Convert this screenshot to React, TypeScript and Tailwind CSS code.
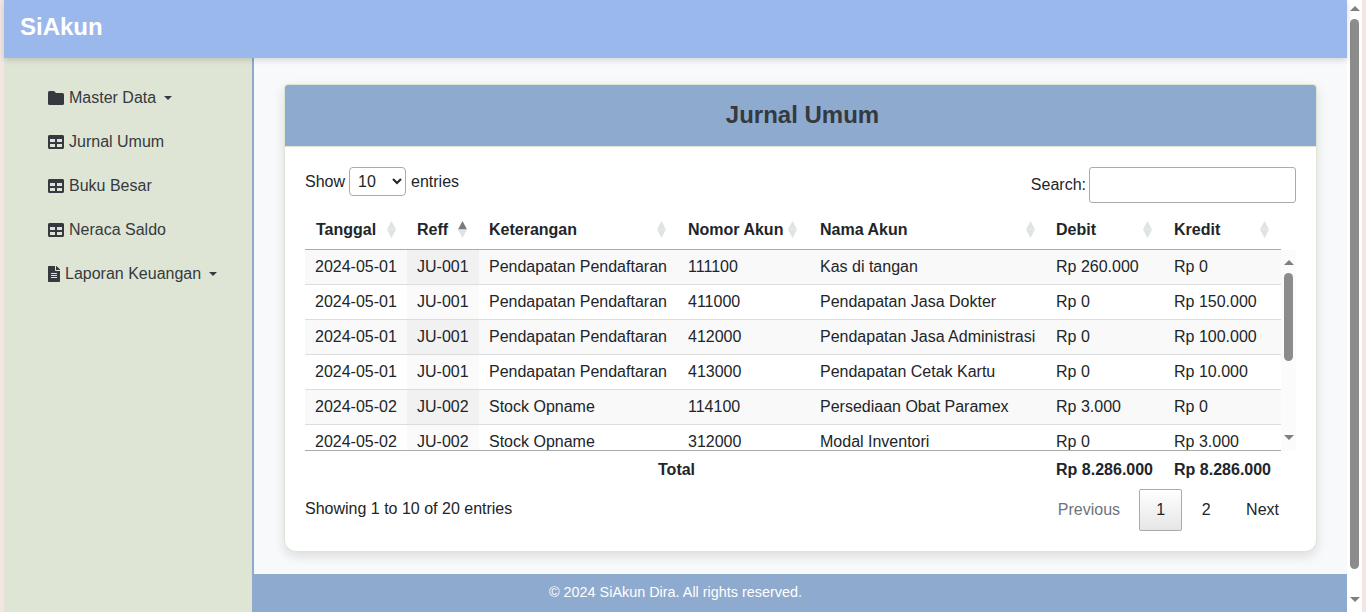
import { FaFileAlt, FaTable } from "react-icons/fa";

const rows = [
  ["2024-05-01", "JU-001", "Pendapatan Pendaftaran", "111100", "Kas di tangan", "Rp 260.000", "Rp 0"],
  ["2024-05-01", "JU-001", "Pendapatan Pendaftaran", "411000", "Pendapatan Jasa Dokter", "Rp 0", "Rp 150.000"],
  ["2024-05-01", "JU-001", "Pendapatan Pendaftaran", "412000", "Pendapatan Jasa Administrasi", "Rp 0", "Rp 100.000"],
  ["2024-05-01", "JU-001", "Pendapatan Pendaftaran", "413000", "Pendapatan Cetak Kartu", "Rp 0", "Rp 10.000"],
  ["2024-05-02", "JU-002", "Stock Opname", "114100", "Persediaan Obat Paramex", "Rp 3.000", "Rp 0"],
  ["2024-05-02", "JU-002", "Stock Opname", "312000", "Modal Inventori", "Rp 0", "Rp 3.000"],
];

const headers = [
  { label: "Tanggal", sort: "ml-[11px]" },
  { label: "Reff", sort: "ml-[10px]", active: true },
  { label: "Keterangan", sort: "ml-[80px]" },
  { label: "Nomor Akun", sort: "ml-[5px]" },
  { label: "Nama Akun", sort: "ml-[119px]" },
  { label: "Debit", sort: "ml-[47px]" },
  { label: "Kredit", sort: "ml-[40px]" },
];

const Cols = () => (
  <colgroup>
    <col className="w-[102px]" />
    <col className="w-[72px]" />
    <col className="w-[199px]" />
    <col className="w-[132px]" />
    <col className="w-[236px]" />
    <col className="w-[118px]" />
    <col className="w-[117px]" />
  </colgroup>
);

const SortIcon = ({ active }: { active?: boolean }) => (
  <svg width="9" height="17" viewBox="0 0 9 17" className="block shrink-0">
    <path d="M4.5 0 L9 8.5 L0 8.5 Z" fill={active ? "#7a7a7a" : "#e0e3e3"} />
    <path d="M4.5 17 L9 8.5 L0 8.5 Z" fill="#e0e3e3" />
  </svg>
);

const FolderIcon = () => (
  <svg width="16" height="14" viewBox="0 0 16 14" fill="currentColor" className="shrink-0">
    <path d="M1.5 0 H6 L8 2 H14.5 A1.5 1.5 0 0 1 16 3.5 V12.5 A1.5 1.5 0 0 1 14.5 14 H1.5 A1.5 1.5 0 0 1 0 12.5 V1.5 A1.5 1.5 0 0 1 1.5 0 Z" />
  </svg>
);

const MenuItem = ({ icon, label, caret }: { icon: React.ReactNode; label: string; caret?: boolean }) => (
  <div className="flex h-[44px] items-center pl-[44px] text-[#343a40]">
    {icon}
    <span className="ml-[5px]">{label}</span>
    {caret && <span className="mt-[-1px] ml-[8px] h-0 w-0 border-x-[4px] border-t-[4px] border-x-transparent border-t-[#343a40]" />}
  </div>
);

const Scrollbar = ({ thumb, padding }: { thumb: string; padding: string }) => (
  <div className={`flex h-full w-[15px] shrink-0 flex-col items-center justify-between ${padding}`}>
    <span className="h-0 w-0 border-x-[5px] border-b-[5px] border-x-transparent border-b-[#7f7f7f]" />
    <span className="h-0 w-0 border-x-[5px] border-t-[5px] border-x-transparent border-t-[#7f7f7f]" />
    <div className={`absolute right-0 left-0 mx-auto w-[9px] rounded-full bg-[#8c8c8c] ${thumb}`} />
  </div>
);

export default function App() {
  return (
    <div className="flex h-[612px] overflow-hidden bg-[#f3e5e2] px-[4px] font-['Liberation_Sans',Arial,sans-serif] text-[16px] text-[#212529]">
      <div className="flex min-w-0 flex-1 flex-col bg-[#f8f9fb]">
        <header className="z-10 flex h-[58px] shrink-0 items-center bg-[#9bb8ed] pb-[4px] pl-[16px] text-[24px] font-bold text-white shadow-[0_2px_6px_rgba(0,0,0,0.15)]">
          SiAkun
        </header>
        <div className="flex min-h-0 flex-1">
          <aside className="w-[250px] shrink-0 border-r-2 border-[#8eaace] bg-[#dfe5d5] pt-[18px]">
            <MenuItem icon={<FolderIcon />} label="Master Data" caret />
            <MenuItem icon={<FaTable size={16} />} label="Jurnal Umum" />
            <MenuItem icon={<FaTable size={16} />} label="Buku Besar" />
            <MenuItem icon={<FaTable size={16} />} label="Neraca Saldo" />
            <MenuItem icon={<FaFileAlt size={16} className="w-[12px]" />} label="Laporan Keuangan" caret />
          </aside>
          <main className="flex min-w-0 flex-1 flex-col">
            <div className="flex-1 px-[30px] pt-[26px]">
              <section className="h-[468px] overflow-hidden rounded-[12px] rounded-t-[4px] border border-[#dfe5d5] bg-white shadow-[0_4px_12px_rgba(0,0,0,0.12)]">
                <div className="flex h-[62px] items-center justify-center border-b border-[#dfe5d5] bg-[#8eaace] pb-[2px] pl-[4px] text-[24px] font-bold text-[#343a40]">
                  Jurnal Umum
                </div>
                <div className="px-[20px] pt-[20px]">
                  <div className="flex h-[44px] items-start justify-between">
                    <div className="flex items-center">
                      Show
                      <select className="mr-[5px] ml-[4px] h-[29px] w-[57px] rounded-[4px] border border-[#aaa] bg-white pl-[4px] text-[16px]" defaultValue="10">
                        <option>10</option>
                      </select>
                      entries
                    </div>
                    <div className="flex items-center">
                      Search:
                      <input className="ml-[3px] h-[36px] w-[207px] rounded-[3px] border border-[#aaa] bg-white" />
                    </div>
                  </div>
                  <table className="w-[976px] table-fixed border-collapse">
                    <Cols />
                    <thead>
                      <tr className="h-[38px] border-b border-[#aaa]">
                        {headers.map((h) => (
                          <th key={h.label} className="pr-0 pl-[10px] text-left font-bold whitespace-nowrap first:pl-[11px]">
                            <div className="flex items-center">
                              {h.label}
                              <span className={h.sort}>
                                <SortIcon active={h.active} />
                              </span>
                            </div>
                          </th>
                        ))}
                      </tr>
                    </thead>
                  </table>
                  <div className="relative flex h-[201px] w-[991px] overflow-hidden">
                    <div className="h-full w-[976px] shrink-0 overflow-hidden border-b border-[#aaa]">
                      <table className="w-[976px] table-fixed border-collapse">
                        <Cols />
                        <tbody>
                          {rows.map((r, i) => (
                            <tr key={i} className={`h-[35px] border-b border-[#ddd] ${i % 2 === 0 ? "bg-[#f9f9f9]" : "bg-white"}`}>
                              {r.map((c, j) => (
                                <td key={j} className={`pl-[10px] whitespace-nowrap ${j === 1 ? (i % 2 === 0 ? "bg-[#f1f1f1]" : "bg-[#fafafa]") : ""}`}>
                                  {c}
                                </td>
                              ))}
                            </tr>
                          ))}
                        </tbody>
                      </table>
                    </div>
                    <div className="relative h-full w-[15px] shrink-0 bg-[#fbfbfb]">
                      <Scrollbar thumb="top-[23px] h-[88px]" padding="pt-[10px] pb-[11px]" />
                    </div>
                  </div>
                  <table className="w-[976px] table-fixed border-collapse">
                    <Cols />
                    <tfoot>
                      <tr className="h-[38px] font-bold">
                        <td colSpan={5} className="pr-[351px] text-right">Total</td>
                        <td className="pl-[10px] whitespace-nowrap">Rp 8.286.000</td>
                        <td className="pl-[10px] whitespace-nowrap">Rp 8.286.000</td>
                      </tr>
                    </tfoot>
                  </table>
                  <div className="flex w-[991px] items-start justify-between">
                    <span className="mt-[8px]">Showing 1 to 10 of 20 entries</span>
                    <div className="flex items-center pr-[1px]">
                      <span className="px-[15px] text-[#6c757d]">Previous</span>
                      <span className="ml-[4px] flex h-[42px] w-[43px] items-center justify-center rounded-[2px] border border-[#aaa] bg-gradient-to-b from-white to-[#e6e6e6]">1</span>
                      <span className="flex h-[42px] w-[48px] items-center justify-center">2</span>
                      <span className="px-[16px]">Next</span>
                    </div>
                  </div>
                </div>
              </section>
            </div>
            <footer className="flex h-[38px] shrink-0 items-center bg-[#8eaace] pl-[295px] text-[14.4px] text-white">
              © 2024 SiAkun Dira. All rights reserved.
            </footer>
          </main>
        </div>
      </div>
      <div className="relative h-full w-[15px] shrink-0 bg-white">
        <Scrollbar thumb="top-[19px] h-[550px]" padding="pt-[6px] pb-[10px]" />
      </div>
    </div>
  );
}
